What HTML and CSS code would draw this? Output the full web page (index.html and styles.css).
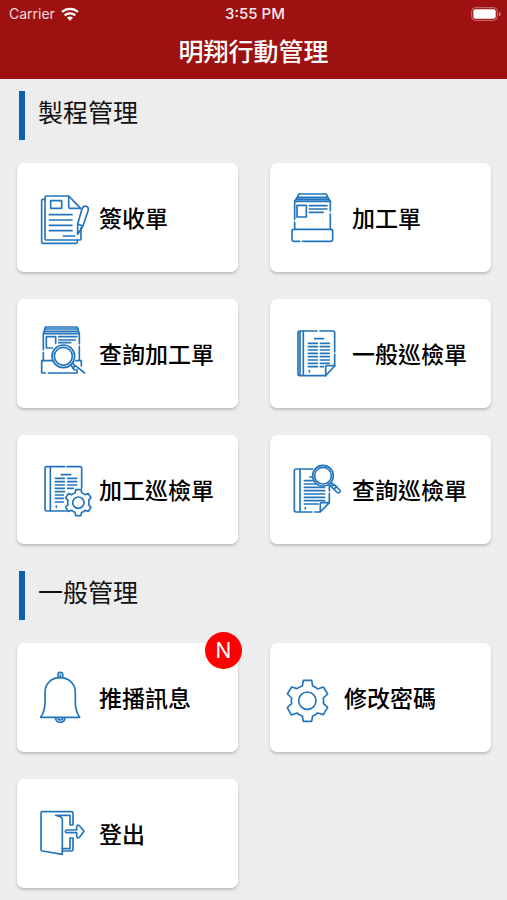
FILE: index.html
```html
<!DOCTYPE html>
<html lang="zh-Hant">
<head>
<meta charset="utf-8">
<meta name="viewport" content="width=device-width, initial-scale=1">
<title>明翔行動管理</title>
<link rel="stylesheet" href="styles.css">
</head>
<body>
<header class="header">
  <div class="status">
    <div class="carrier">
      <span>Carrier</span>
      <svg class="wifi" viewBox="0 0 54 42" aria-hidden="true">
        <path d="M3 15a36 36 0 0 1 48 0M11 25a24 24 0 0 1 32 0" fill="none" stroke="#fff" stroke-width="7"/>
        <path d="M18 32a14 14 0 0 1 18 0l-9 9z" fill="#fff"/>
      </svg>
    </div>
    <span class="time">3:55 PM</span>
    <svg class="battery" viewBox="0 0 90 42" aria-hidden="true">
      <rect x="2" y="2" width="77" height="38" rx="11" fill="none" stroke="#c67775" stroke-width="3"/>
      <rect x="7" y="7" width="67" height="28" rx="6" fill="#fff"/>
      <path d="M84 14q6 2 6 7t-6 7z" fill="#c67775"/>
    </svg>
  </div>
  <h1 class="title">明翔行動管理</h1>
</header>

<main class="main">
  <section>
    <h2 class="heading">製程管理</h2>
    <div class="grid">
      <button class="card" type="button">
        <svg class="icon" viewBox="69 96 180 180" aria-hidden="true">
          <path d="M105 133H98q-3 0-3 3V262q0 3 3 3H198q4 0 4-4V256"/>
          <path d="M213 218V251q0 4-4 4H109q-4 0-4-4V127q0-4 4-4H176L212 160M176 123V156q0 4 4 4H212"/>
          <rect x="122" y="137" width="33" height="23"/>
          <path d="M118 179H186M118 195H186M118 211H186M118 227H186M160 243H194"/>
          <path d="M203 207L216 162Q220 151 229 154Q237 157 234 168L219 213L203 238ZM203 207L219 213"/>
        </svg>
        <span>簽收單</span>
      </button>
      <button class="card" type="button">
        <svg class="icon" viewBox="78 96 180 180" aria-hidden="true">
          <path d="M113 127L116 117H199L203 127M104 139L111 127H204L211 139M104 139H211M108 133H207"/>
          <path d="M104 139V193M104 202V223M211 139V168M211 177V223"/>
          <rect x="111" y="151" width="28" height="35"/>
          <path d="M148 152H201M148 162H201M148 172H190"/>
          <path d="M119 259H102Q96 259 96 252V228Q96 223 101 223H213Q218 223 218 228V253Q218 259 212 259H128"/>
        </svg>
        <span>加工單</span>
      </button>
      <button class="card" type="button">
        <svg class="icon" viewBox="69 99 180 180" aria-hidden="true">
          <path d="M100 131L106 111H202L208 131M104 124H205M106 117H202M100 131H208V161M100 131V179M100 188V212M208 169V211"/>
          <path d="M137 160V140H109V174H128M146 140H200M146 150H196M146 158H182"/>
          <path d="M129 212H95V249H106M115 249H201V239M198 212H214V228"/>
          <circle cx="160" cy="199" r="34"/><circle cx="160" cy="199" r="27"/>
          <path d="M182 225L189 233M187 219L196 228M188 234L196 227L224 249M188 234L195 240"/>
        </svg>
        <span>查詢加工單</span>
      </button>
      <button class="card" type="button">
        <svg class="icon" viewBox="78 99 180 180" aria-hidden="true">
          <path d="M171 123H119Q114 123 114 128V252Q114 257 119 257H197L224 228V193M180 123H219Q224 123 224 128V186M130 123V257M120 124V256"/>
          <path d="M197 257V231Q197 227 201 227H224M164 146H190"/>
          <path d="M145 160H172M145 170H172M145 180H172M145 190H172M145 200H172M145 210H172M145 220H172M145 230H172M181 160H208M181 170H208M181 180H208M181 190H208M181 200H208M181 210H208M181 220H208M181 230H190M148 242V246"/>
        </svg>
        <span>一般巡檢單</span>
      </button>
      <button class="card" type="button">
        <svg class="icon" viewBox="69 102 180 180" aria-hidden="true">
          <path d="M164 125H110Q105 125 105 130V253Q105 258 110 258H169M171 125H210Q215 125 215 130V190M121 125V258M154 149H182"/>
          <path d="M136 160H163M136 170H163M136 180H163M136 190H163M136 200H163M136 210H160M136 220H160M136 231H160M173 160H200M173 170H200M173 180H200M173 190H190M139 243V247"/>
          <path class="filled" d="M196 203L197 194H213L215 203Q220 205 225 209L235 206L243 218L236 226Q238 233 236 239L243 247L235 259L225 256Q220 261 215 262L212 272H197L195 262Q189 260 185 256L174 259L167 246L174 239Q172 232 174 226L167 218L175 206L185 209Q190 205 196 203Z"/>
          <circle cx="205" cy="233" r="17"/>
        </svg>
        <span>加工巡檢單</span>
      </button>
      <button class="card" type="button">
        <svg class="icon" viewBox="78 102 180 180" aria-hidden="true">
          <path d="M158 132H108Q103 132 103 137V256Q103 261 108 261H156M164 261H181L208 233V205M208 180V197M120 132V261M181 261V236Q181 233 185 233H208"/>
          <path d="M133 167H158M133 177H168M133 187H194M133 197H194M133 207H194M133 217H194M133 227H194M133 237H175M149 156H158M136 248V252"/>
          <circle class="filled" cx="189" cy="152" r="31"/><circle cx="189" cy="152" r="25"/>
          <path d="M207 178L215 186M214 173L221 181M216 187Q213 181 219 179Q222 178 225 181L239 195Q243 201 237 203Q234 205 230 201ZM224 190L230 184"/>
        </svg>
        <span>查詢巡檢單</span>
      </button>
    </div>
  </section>

  <section>
    <h2 class="heading">一般管理</h2>
    <div class="grid">
      <button class="card" type="button">
        <svg class="icon" viewBox="69 321 180 180" aria-hidden="true">
          <path d="M92 472Q105 453 105 427V397C105 370 125 353 150 353S196 370 196 397V427Q196 453 209 472Z"/>
          <path d="M144 352V343Q144 337 151 337T158 343V352M151 345V351M136 473Q138 487 151 487T165 473M143 474Q145 480 151 480T158 474"/>
        </svg>
        <span>推播訊息</span>
        <span class="badge">N</span>
      </button>
      <button class="card" type="button">
        <svg class="icon icon-narrow" viewBox="78 111 156 180" aria-hidden="true">
          <path d="M127 168L130 151H155L158 168Q167 171 173 177L190 171L203 192L190 204Q192 212 190 220L203 232L190 254L173 249Q166 255 158 258L155 274H130L127 258Q118 255 111 249L94 255L82 233L95 221Q93 212 95 204L82 192L95 171L111 176Q118 171 127 168Z"/>
          <circle cx="142" cy="212" r="26"/>
        </svg>
        <span>修改密碼</span>
      </button>
      <button class="card" type="button">
        <svg class="icon" viewBox="69 99 180 180" aria-hidden="true">
          <path d="M93 240V129Q93 125 97 125H184Q189 125 189 130V165H180V136H137L152 141Q157 143 157 148V253L98 243Q93 242 93 239"/>
          <path d="M157 236H180V204H189V238Q189 243 184 243H157"/>
          <path d="M170 180H200V170Q202 161 209 168L222 184L209 201Q202 208 200 198V188H170Q166 188 166 184T170 180Z"/>
        </svg>
        <span>登出</span>
      </button>
    </div>
  </section>
</main>
</body>
</html>
```

FILE: styles.css
```css
* {
  box-sizing: border-box;
}

body {
  margin: 0;
  background: #ededed;
  color: #111;
  font-family: "Noto Sans CJK TC", sans-serif;
}

.header {
  background: #9d1111;
  color: #fff;
  height: 79px;
}

.status {
  display: grid;
  grid-template-columns: 1fr auto 1fr;
  align-items: center;
  height: 28px;
  padding: 0 6px 0 9px;
  font: 14px/28px Inter, sans-serif;
}

.carrier {
  display: flex;
  align-items: center;
  gap: 6px;
  color: #f3dcdc;
}

.wifi {
  width: 18px;
  height: 14px;
}

.time {
  font-size: 15px;
  font-weight: 500;
  color: #f8e8e8;
}

.battery {
  width: 30px;
  height: 14px;
  justify-self: end;
}

.title {
  margin: 0;
  font-size: 25px;
  line-height: 44px;
  font-weight: 500;
  text-align: center;
}

.main {
  display: grid;
  gap: 27px;
  padding: 12px 16px 12px 17px;
}

.heading {
  margin: 0 2px 23px;
  height: 49px;
  padding-left: 13px;
  border-left: 6px solid #0c62b0;
  font-size: 25px;
  line-height: 41px;
  font-weight: 400;
}

.grid {
  display: grid;
  grid-template-columns: 1fr 1fr;
  gap: 27px 32px;
}

.card {
  position: relative;
  display: flex;
  align-items: center;
  gap: 6px;
  padding: 24px 0 25px 16px;
  border: 0;
  border-radius: 7px;
  background: #fff;
  box-shadow: 0 2px 3px rgba(0, 0, 0, 0.2);
  color: #000;
  font: 500 23px/34px "Noto Sans CJK TC", sans-serif;
  white-space: nowrap;
}

.icon {
  flex: none;
  width: 60px;
  height: 60px;
  fill: none;
  stroke: #2374ba;
  stroke-width: 5;
  stroke-linecap: round;
  stroke-linejoin: round;
}

.icon-narrow {
  width: 52px;
}

.filled {
  fill: #fff;
}

.badge {
  position: absolute;
  top: -11px;
  right: -4px;
  width: 37px;
  height: 37px;
  border-radius: 50%;
  background: #f00;
  color: #fff;
  font: 21px/38px Inter, sans-serif;
  text-align: center;
}
```
